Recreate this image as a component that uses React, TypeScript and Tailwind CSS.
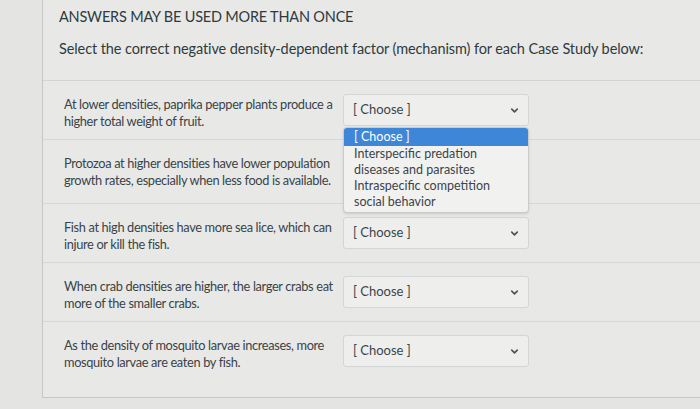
import { ChevronDown } from 'lucide-react'

const rows = [
  'At lower densities, paprika pepper plants produce a higher total weight of fruit.',
  'Protozoa at higher densities have lower population growth rates, especially when less food is available.',
  'Fish at high densities have more sea lice, which can injure or kill the fish.',
  'When crab densities are higher, the larger crabs eat more of the smaller crabs.',
  'As the density of mosquito larvae increases, more mosquito larvae are eaten by fish.',
]

const options = [
  'Interspecific predation',
  'diseases and parasites',
  'Intraspecific competition',
  'social behavior',
]

function Select({ open }: { open?: boolean }) {
  return (
    <div className="relative w-[186px] shrink-0">
      <div className="flex h-[32px] items-center justify-between rounded-[3px] border border-[#d3d6d6] bg-[#eeefed] pl-[9px] pr-[8px] text-[13px] text-[#3b444b]">
        <span>[ Choose ]</span>
        <ChevronDown size={11} strokeWidth={3.5} className="text-[#4a5358]" />
      </div>
      {open && (
        <div className="absolute left-0 top-[33px] z-10 w-[186px] rounded-[4px] border border-[#c9cccc] bg-[#f1f2f0] text-[12.5px] leading-[16px] text-[#3b444b] shadow-sm">
          <div className="rounded-t-[3px] bg-[#3d86d8] px-[10px] py-[1px] text-white">[ Choose ]</div>
          {options.map((o) => (
            <div key={o} className="px-[10px]">
              {o}
            </div>
          ))}
          <div className="h-[2px]" />
        </div>
      )}
    </div>
  )
}

export default function App() {
  return (
    <div
      className="h-[409px] w-[700px] overflow-hidden bg-[#e4e5e3] pl-[42px]"
      style={{ fontFamily: 'Lato, "Open Sans", sans-serif' }}
    >
      <div className="h-[398px] border-b border-l border-[#c4c7c6] bg-[#e8e9e7]">
        {/* Header */}
        <div className="border-b border-[#d2d5d4] pl-[16px] pt-[7px] text-[#2f3a40]">
          <p className="text-[14.5px] leading-[20px] tracking-[-0.2px]">ANSWERS MAY BE USED MORE THAN ONCE</p>
          <p className="mt-[12px] h-[41px] text-[14.5px] leading-[20px] tracking-[-0.1px]">
            Select the correct negative density-dependent factor (mechanism) for each Case Study below:
          </p>
        </div>

        {/* Rows */}
        {rows.map((text, i) => (
          <div
            key={i}
            className={`flex items-start gap-[4px] border-b border-[#d6d8d7] pl-[21px] pt-[13px] ${
              i === rows.length - 1 ? 'h-[80px] border-b-0' : i === 1 ? 'h-[64px]' : 'h-[59px]'
            }`}
          >
            <p className="w-[275px] pt-[2px] text-[12.8px] leading-[17px] tracking-[-0.35px] text-[#3a4348]">
              {text}
            </p>
            <Select open={i === 0} />
          </div>
        ))}
      </div>
    </div>
  )
}
